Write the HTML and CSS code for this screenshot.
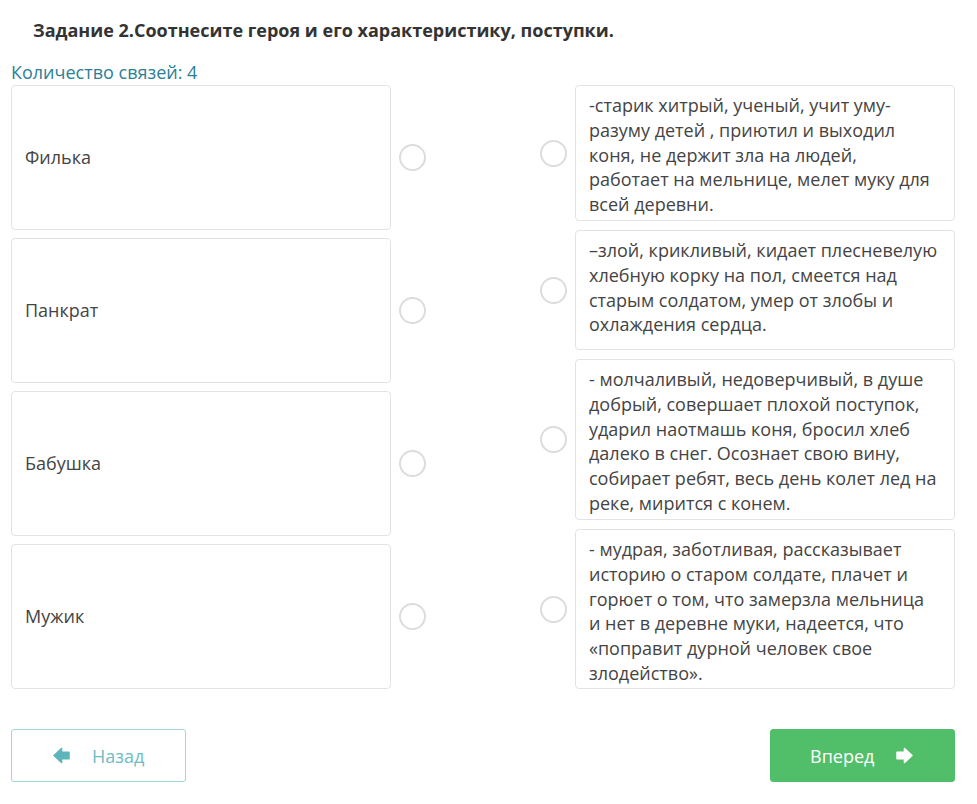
FILE: index.html
```html
<!DOCTYPE html>
<html lang="ru">
<head>
    <meta charset="UTF-8">
    <title>Задание 2</title>
    <link rel="stylesheet" href="styles.css">
</head>
<body>
    <h2 class="task-title">Задание 2.Соотнесите героя и его характеристику, поступки.</h2>
    <div class="links-count">Количество связей: 4</div>

    <div class="match">
        <div class="side side-left">
            <div class="row">
                <div class="card">Филька</div>
                <span class="dot"></span>
            </div>
            <div class="row">
                <div class="card">Панкрат</div>
                <span class="dot"></span>
            </div>
            <div class="row">
                <div class="card">Бабушка</div>
                <span class="dot"></span>
            </div>
            <div class="row">
                <div class="card">Мужик</div>
                <span class="dot"></span>
            </div>
        </div>

        <div class="side side-right">
            <div class="row">
                <span class="dot"></span>
                <div class="card">-старик хитрый, ученый, учит уму-разуму детей , приютил и выходил коня, не держит зла на людей, работает на мельнице, мелет муку для всей деревни.</div>
            </div>
            <div class="row">
                <span class="dot"></span>
                <div class="card">–злой, крикливый, кидает плесневелую хлебную корку на пол, смеется над старым солдатом, умер от злобы и охлаждения сердца.</div>
            </div>
            <div class="row">
                <span class="dot"></span>
                <div class="card">- молчаливый, недоверчивый, в душе добрый, совершает плохой поступок, ударил наотмашь коня, бросил хлеб далеко в снег. Осознает свою вину, собирает ребят, весь день колет лед на реке, мирится с конем.</div>
            </div>
            <div class="row">
                <span class="dot"></span>
                <div class="card">- мудрая, заботливая, рассказывает историю о старом солдате, плачет и горюет о том, что замерзла мельница и нет в деревне муки, надеется, что «поправит дурной человек свое злодейство».</div>
            </div>
        </div>
    </div>

    <div class="nav">
        <button class="btn btn-back">
            <svg class="arrow" viewBox="0 0 16 16"><path d="M1 8 L8 1.5 L8 5 L15 5 L15 11 L8 11 L8 14.5 Z"/></svg>
            Назад
        </button>
        <button class="btn btn-next">
            Вперед
            <svg class="arrow" viewBox="0 0 16 16"><path d="M15 8 L8 1.5 L8 5 L1 5 L1 11 L8 11 L8 14.5 Z"/></svg>
        </button>
    </div>
</body>
</html>
```

FILE: styles.css
```css
body {
    margin: 0;
    padding: 0 22px 0 11px;
    font-family: 'Open Sans', 'Noto Sans', sans-serif;
    color: #444;
    background: #fff;
}
.task-title {
    margin: 0;
    padding: 18px 0 0 22px;
    font-size: 18px;
    font-weight: 700;
    line-height: 24px;
    color: #333;
}
.links-count {
    margin-top: 19px;
    font-size: 18px;
    line-height: 22px;
    color: #2b7f96;
}
.match {
    display: flex;
    justify-content: space-between;
    margin-top: 2px;
}
.side {
    display: grid;
}
.side-left {
    grid-template-rows: repeat(4, 145px);
    gap: 8px;
}
.side-right {
    grid-template-rows: 136px 120px 161px 160px;
    gap: 9px;
}
.row {
    display: flex;
    align-items: center;
    gap: 8px;
}
.card {
    box-sizing: border-box;
    width: 380px;
    height: 100%;
    border: 1px solid #e3e3e3;
    border-radius: 4px;
    font-size: 18px;
    line-height: 24.75px;
    color: #444;
}
.side-left .card {
    display: flex;
    align-items: center;
    padding: 0 13px;
}
.side-right .card {
    padding: 7px 15px 7px 13px;
}
.dot {
    box-sizing: border-box;
    width: 27px;
    height: 27px;
    border: 2px solid #dcdcdc;
    border-radius: 50%;
    flex-shrink: 0;
}
.nav {
    display: flex;
    justify-content: space-between;
    margin-top: 40px;
}
.btn {
    box-sizing: border-box;
    height: 53px;
    border-radius: 3px;
    font-family: 'Open Sans', 'Noto Sans', sans-serif;
    font-size: 18px;
    display: flex;
    align-items: center;
    gap: 22px;
    cursor: pointer;
}
.btn-back {
    width: 175px;
    padding-left: 41px;
    background: #fff;
    border: 1px solid #9fd6da;
    color: #72bcc2;
}
.btn-back .arrow {
    fill: #5db5bc;
    stroke: #5db5bc;
}
.btn-next {
    width: 185px;
    padding-left: 39px;
    background: #51bf6a;
    border: 1px solid #51bf6a;
    color: #fff;
}
.btn-next .arrow {
    fill: #fff;
    stroke: #fff;
}
.arrow {
    width: 17px;
    height: 17px;
    stroke-width: 1.5;
    stroke-linejoin: round;
}
```
